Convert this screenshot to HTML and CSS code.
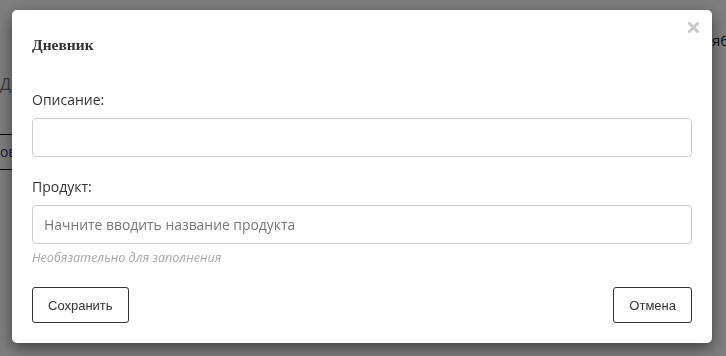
FILE: index.html
```html
<!DOCTYPE html>
<html>
<head>
    <meta charset="UTF-8" />
    <link rel="stylesheet" href="styles.css">
</head>
<body>
    <div class="page">
        <div class="page-top">
            <span class="page-date">ябр</span>
        </div>
        <div class="page-title">Дн</div>
        <div class="page-row">ов.</div>
    </div>

    <div class="backdrop"></div>

    <div class="modal">
        <button class="close" type="button" aria-label="Закрыть">
            <svg width="11" height="11" viewBox="0 0 11 11">
                <path d="M1.5 1.5 L9.5 9.5 M9.5 1.5 L1.5 9.5" stroke="#c9c9c9" stroke-width="3" stroke-linecap="round"/>
            </svg>
        </button>
        <h4 class="modal-title">Дневник</h4>

        <div class="field">
            <label for="descr">Описание:</label>
            <input id="descr" class="control" type="text">
        </div>

        <div class="field">
            <label for="product">Продукт:</label>
            <input id="product" class="control" type="text"
                placeholder="Начните вводить название продукта">
            <span class="hint">Необязательно для заполнения</span>
        </div>

        <div class="modal-footer">
            <button class="button" type="button">Сохранить</button>
            <button class="button" type="button">Отмена</button>
        </div>
    </div>
</body>
</html>
```

FILE: styles.css
```css
html, body {
    margin: 0;
    height: 100%;
    overflow: hidden;
}
body {
    font-family: "Open Sans", "Noto Sans", sans-serif;
    color: #333333;
    background: #ffffff;
}

/* page under the dialog */
.page-top {
    padding: 30px 0 0 712px;
    font-size: 15px;
    line-height: 20px;
    color: #222222;
    white-space: nowrap;
}
.page-title {
    margin-top: 24px;
    font-size: 16px;
    line-height: 20px;
    color: #777777;
}
.page-row {
    margin-top: 40px;
    width: 34px;
    padding: 7px 0;
    border-top: 1px solid #111111;
    border-bottom: 1px solid #111111;
    font-size: 14px;
    line-height: 20px;
    color: #3c2a6e;
}

.backdrop {
    position: fixed;
    top: 0;
    left: 0;
    right: 0;
    bottom: 0;
    background: rgba(0, 0, 0, 0.5);
}

/* dialog */
.modal {
    position: absolute;
    top: 10px;
    left: 12px;
    width: 700px;
    height: 333px;
    box-sizing: border-box;
    padding: 21px 20px 20px 20px;
    background: #ffffff;
    border-radius: 5px;
    box-shadow: 0 5px 15px rgba(0, 0, 0, 0.5);
    display: flex;
    flex-direction: column;
}
.close {
    position: absolute;
    top: 12px;
    right: 13px;
    padding: 0;
    border: 0;
    background: none;
    line-height: 0;
    cursor: pointer;
}
.modal-title {
    margin: 0;
    font-family: "Liberation Serif", serif;
    font-size: 15.5px;
    font-weight: bold;
    line-height: 28px;
    color: #333333;
}

.field {
    display: flex;
    flex-direction: column;
    margin-top: 31px;
}
.field + .field {
    margin-top: 20px;
}
.field label {
    font-size: 14px;
    line-height: 20px;
    margin-bottom: 8px;
}
.control {
    height: 39px;
    box-sizing: border-box;
    padding: 6px 11px;
    border: 1px solid #cccccc;
    border-radius: 4px;
    font-family: inherit;
    font-size: 13.9px;
    color: #555555;
}
.control::placeholder {
    color: #777777;
}
.hint {
    margin-top: 5px;
    font-size: 12.6px;
    line-height: 17px;
    font-style: italic;
    color: #a8a8a8;
}

.modal-footer {
    display: flex;
    justify-content: space-between;
    margin-top: auto;
}
.button {
    height: 36px;
    padding: 0 15px;
    border: 1px solid #333333;
    border-radius: 3px;
    background: #ffffff;
    font-family: "Liberation Sans", Arial, sans-serif;
    font-size: 13px;
    color: #333333;
    cursor: pointer;
}
```
